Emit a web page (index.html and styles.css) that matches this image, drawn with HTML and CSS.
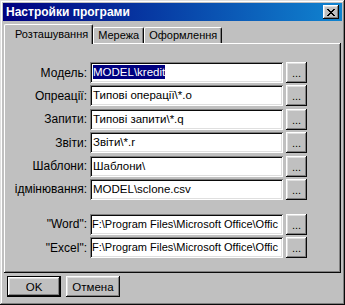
FILE: index.html
```html
<!DOCTYPE html>
<html lang="uk">
<head>
    <meta charset="UTF-8">
    <meta name="viewport" content="width=device-width, initial-scale=1.0">
    <title>Настройки програми</title>
    <link rel="stylesheet" href="styles.css">
</head>
<body>
    <div class="window">
        <div class="titlebar">
            <span class="title">Настройки програми</span>
            <button class="close">
                <svg width="8" height="7" viewBox="0 0 8 7" shape-rendering="crispEdges">
                    <path d="M0 0h2v1h-2zM6 0h2v1h-2zM1 1h2v1h-2zM5 1h2v1h-2zM2 2h4v1h-4zM3 3h2v1h-2zM2 4h4v1h-4zM1 5h2v1h-2zM5 5h2v1h-2zM0 6h2v1h-2zM6 6h2v1h-2z" fill="#000"/>
                </svg>
            </button>
        </div>

        <div class="tabs">
            <div class="tab active">Розташування</div>
            <div class="tab">Мережа</div>
            <div class="tab">Оформлення</div>
        </div>

        <div class="panel">
            <div class="form">
                <label>Модель:</label>
                <div class="field"><span class="sel">MODEL\kredit</span></div>
                <button class="more">...</button>

                <label>Опреації:</label>
                <div class="field">Типові операції\*.o</div>
                <button class="more">...</button>

                <label>Запити:</label>
                <div class="field">Типові запити\*.q</div>
                <button class="more">...</button>

                <label>Звіти:</label>
                <div class="field">Звіти\*.r</div>
                <button class="more">...</button>

                <label>Шаблони:</label>
                <div class="field">Шаблони\</div>
                <button class="more">...</button>

                <label>ідмінювання:</label>
                <div class="field">MODEL\sclone.csv</div>
                <button class="more">...</button>

                <div class="spacer"></div>

                <label>"Word":</label>
                <div class="field path">F:\Program Files\Microsoft Office\Offic</div>
                <button class="more">...</button>

                <label>"Excel":</label>
                <div class="field path">F:\Program Files\Microsoft Office\Offic</div>
                <button class="more">...</button>
            </div>
        </div>

        <div class="footer">
            <button class="btn default">OK</button>
            <button class="btn">Отмена</button>
        </div>
    </div>
</body>
</html>
```

FILE: styles.css
```css
* {
    box-sizing: border-box;
}
body {
    margin: 0;
    font-family: "Liberation Sans", Arial, sans-serif;
    font-size: 11px;
    color: #000;
}
button {
    font-family: inherit;
    font-size: 11px;
    color: #000;
    background: #c0c0c0;
    border: none;
    padding: 0;
    margin: 0;
    box-shadow: inset -1px -1px #0a0a0a, inset 1px 1px #fff, inset -2px -2px #808080, inset 2px 2px #dfdfdf;
}
.window {
    width: 345px;
    height: 305px;
    background: #c0c0c0;
    padding: 3px;
    box-shadow: inset -1px -1px #0a0a0a, inset 1px 1px #dfdfdf, inset -2px -2px #808080, inset 2px 2px #fff;
}
.titlebar {
    height: 18px;
    display: flex;
    align-items: center;
    justify-content: space-between;
    padding: 0 3px 0 3px;
    background: linear-gradient(to right, #000080, #1084d0);
}
.title {
    color: #fff;
    font-weight: bold;
    font-size: 12px;
}
.close {
    width: 16px;
    height: 14px;
    display: flex;
    align-items: center;
    justify-content: center;
}
.tabs {
    display: flex;
    align-items: flex-end;
    margin-top: 3px;
    height: 19px;
    padding-left: 1px;
}
.tab {
    height: 16px;
    padding: 0 4px;
    line-height: 15px;
    border-top: 1px solid #fff;
    border-left: 1px solid #fff;
    border-right: 1px solid #0a0a0a;
    box-shadow: inset -1px 0 #808080;
    border-radius: 2px 2px 0 0;
    font-size: 11px;
}
.tab.active {
    height: 20px;
    margin-bottom: -1px;
    padding: 0 4px 0 10px;
    line-height: 19px;
    background: #c0c0c0;
    position: relative;
    z-index: 1;
}
.panel {
    height: 230px;
    margin: 0 1px;
    padding: 19px 0 0 2px;
    box-shadow: inset -1px -1px #0a0a0a, inset 1px 1px #fff, inset -2px -2px #808080;
}
.form {
    display: grid;
    grid-template-columns: 81px 193px 21px;
    column-gap: 3px;
    row-gap: 2.4px;
    align-items: center;
}
.form label {
    text-align: right;
    font-size: 12px;
}
.spacer {
    grid-column: 1 / -1;
    height: 9.2px;
}
.field {
    height: 21px;
    line-height: 20px;
    padding: 0 3px;
    background: #fff;
    white-space: nowrap;
    overflow: hidden;
    font-size: 11.5px;
    box-shadow: inset 1px 1px #808080, inset -1px -1px #fff, inset 2px 2px #0a0a0a, inset -2px -2px #dfdfdf;
}
.field.path {
    font-size: 11px;
    padding: 0 2px;
}
.sel {
    background: #000080;
    color: #fff;
    padding: 1px 0;
}
.more {
    height: 21px;
    line-height: 22px;
}
.footer {
    display: flex;
    gap: 5px;
    padding: 3px 0 0 4px;
}
.btn {
    width: 54px;
    height: 21px;
    font-size: 11.5px;
}
.btn.default {
    box-shadow: inset 0 0 0 1px #000, inset -2px -2px #0a0a0a, inset 2px 2px #fff, inset -3px -3px #808080, inset 3px 3px #dfdfdf;
}
```
